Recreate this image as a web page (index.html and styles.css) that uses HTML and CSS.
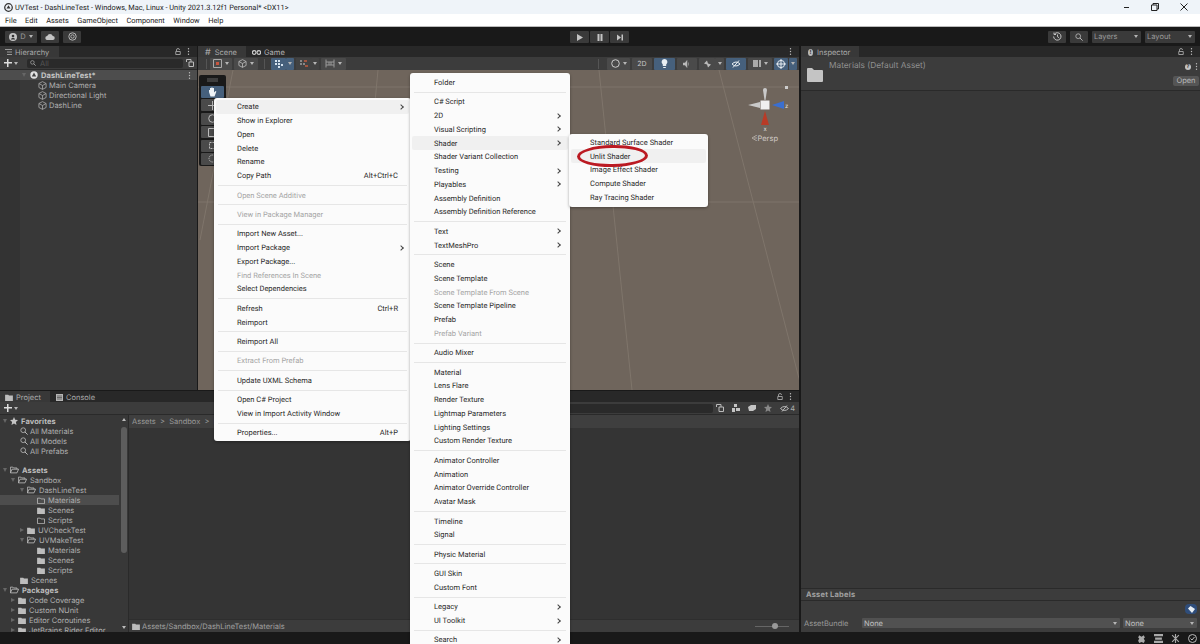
FILE: index.html
```html
<!DOCTYPE html>
<html lang="en">
<head>
    <meta charset="UTF-8">
    <title>UVTest - DashLineTest</title>
    <link rel="stylesheet" href="styles.css">
</head>
<body>
    <svg width="0" height="0" class="defs">
        <symbol id="folder" viewBox="0 0 10 9"><path d="M0 1h4l1 1h5v7H0z" fill="currentColor"/></symbol>
        <symbol id="folder-open" viewBox="0 0 11 9"><path d="M.5 8V1h3l1 1h4v1.500M.5 8l2-4.500h8L8.500 8z" fill="none" stroke="currentColor"/></symbol>
        <symbol id="folder-empty" viewBox="0 0 10 9"><path d="M.5 1.500h3.500l1 1h4.500v6h-9z" fill="none" stroke="currentColor"/></symbol>
        <symbol id="cube" viewBox="0 0 10 10"><path d="M5 .7l4 2.100v4.400l-4 2.100-4-2.100V2.800zM1 2.800l4 2.200 4-2.200M5 5v4.300" fill="none" stroke="currentColor" stroke-width=".9"/></symbol>
        <symbol id="search" viewBox="0 0 10 10"><circle cx="4" cy="4" r="3" fill="none" stroke="currentColor"/><path d="M6.200 6.200L9.500 9.500" stroke="currentColor" stroke-width="1.200"/></symbol>
        <symbol id="lock" viewBox="0 0 8 9"><path d="M2 4V2.500a2 2 0 0 1 4 0M1 4.500h6v4H1z" fill="none" stroke="currentColor"/></symbol>
        <symbol id="dots" viewBox="0 0 3 9"><circle cx="1.500" cy="1" r=".9" fill="currentColor"/><circle cx="1.500" cy="4.500" r=".9" fill="currentColor"/><circle cx="1.500" cy="8" r=".9" fill="currentColor"/></symbol>
    </svg>

    <div class="titlebar">
        <svg class="unity-logo" width="9" height="9" viewBox="0 0 10 10"><circle cx="5" cy="5" r="4.200" fill="none" stroke="#333" stroke-width="1.400"/><path d="M5 2.500l2.200 3.700H2.800z" fill="#333"/></svg>
        <span>UVTest - DashLineTest - Windows, Mac, Linux - Unity 2021.3.12f1 Personal* &lt;DX11&gt;</span>
        <div class="window-btns">
            <svg width="7" height="7" viewBox="0 0 7 7"><path d="M1 3.500h5" stroke="#222"/></svg>
            <svg width="8" height="8" viewBox="0 0 8 8"><path d="M.5 2h5.500v5.500H.5zM2 2V.5h5.500V6H6" fill="none" stroke="#222"/></svg>
            <svg width="8" height="8" viewBox="0 0 8 8"><path d="M.5.500l7 7M7.500.500l-7 7" stroke="#222"/></svg>
        </div>
    </div>
    <div class="menubar">
        <span>File</span><span>Edit</span><span>Assets</span><span>GameObject</span><span>Component</span><span>Window</span><span>Help</span>
    </div>

    <div class="toolbar">
        <div class="tool-left">
            <div class="tbtn account">
                <svg width="8" height="8" viewBox="0 0 8 8"><circle cx="4" cy="4" r="4" fill="#c4c4c4"/><circle cx="4" cy="3" r="1.300" fill="#333"/><path d="M1.800 6.500a2.300 2.300 0 0 1 4.400 0z" fill="#333"/></svg>
                <span>D</span><i class="arrow"></i>
            </div>
            <div class="tbtn wide">
                <svg width="10" height="6" viewBox="0 0 10 6"><path d="M2.500 6a2 2 0 0 1-.3-4A3 3 0 0 1 7.800 2 2 2 0 0 1 7.700 6z" fill="#c4c4c4"/></svg>
            </div>
            <div class="tbtn wide">
                <svg width="9" height="9" viewBox="0 0 9 9"><circle cx="4.500" cy="4.500" r="3.700" fill="none" stroke="#b5b5b5"/><circle cx="4.500" cy="4.500" r="1.700" fill="none" stroke="#b5b5b5"/></svg>
            </div>
        </div>
        <div class="play-group">
            <div class="tbtn play"><svg width="6" height="7" viewBox="0 0 6 7"><path d="M0 0l6 3.500L0 7z" fill="#c4c4c4"/></svg></div>
            <div class="tbtn play"><svg width="6" height="7" viewBox="0 0 6 7"><path d="M.5 0h2v7h-2zM3.500 0h2v7h-2z" fill="#c4c4c4"/></svg></div>
            <div class="tbtn play"><svg width="6" height="7" viewBox="0 0 6 7"><path d="M0 .5l4 3-4 3zM4.500.5H6v6H4.500z" fill="#c4c4c4"/></svg></div>
        </div>
        <div class="tool-right">
            <div class="tbtn history"><svg width="9" height="9" viewBox="0 0 9 9"><path d="M1.500 2a3.700 3.700 0 1 1-.9 2.500M1 .5V2.500h2M4.500 2.500v2.200l1.500 1" fill="none" stroke="#c4c4c4"/></svg></div>
            <div class="tbtn history"><svg width="8" height="8"><use href="#search"/></svg></div>
            <div class="tbtn dropdown layers"><span>Layers</span><i class="arrow"></i></div>
            <div class="tbtn dropdown layout"><span>Layout</span><i class="arrow"></i></div>
        </div>
    </div>

    <div class="workspace">
        <div class="left-col">
            <div class="top-row">
                <section class="panel hierarchy">
                    <div class="tabs">
                        <div class="tab active wide-tab">
                            <svg width="7" height="6" viewBox="0 0 7 6"><path d="M0 .5h7M2 3h5M2 5.500h5" stroke="#999"/></svg>
                            <span>Hierarchy</span>
                        </div>
                        <div class="tab-tools"><svg width="6" height="7"><use href="#lock"/></svg><svg width="3" height="7"><use href="#dots"/></svg></div>
                    </div>
                    <div class="search-bar">
                        <div class="add-btn"><span class="plus"></span><i class="arrow"></i></div>
                        <div class="search-field"><svg width="6" height="6"><use href="#search"/></svg><span>All</span></div>
                        <svg class="search-extra" width="8" height="8" viewBox="0 0 8 8"><path d="M.5 3V.5H5V3M3 3h4.500v4.500H3z" fill="none" stroke="#bbb"/></svg>
                    </div>
                    <div class="scene-root">
                        <i class="tri-down"></i>
                        <svg class="scene-icon" width="8" height="8" viewBox="0 0 8 8"><circle cx="4" cy="4" r="3.700" fill="#e4e4e4"/><path d="M4 1.500L6.200 5.500H1.800z" fill="#444"/></svg>
                        <span>DashLineTest*</span>
                        <svg class="row-dots" width="3" height="7"><use href="#dots"/></svg>
                    </div>
                    <div class="tree-row go"><svg width="9" height="9"><use href="#cube"/></svg>Main Camera</div>
                    <div class="tree-row go"><svg width="9" height="9"><use href="#cube"/></svg>Directional Light</div>
                    <div class="tree-row go"><svg width="9" height="9"><use href="#cube"/></svg>DashLine</div>
                </section>

                <section class="panel scene">
                    <div class="tabs">
                        <div class="tab active scene-tab"><b>#</b><span>Scene</span></div>
                        <div class="tab game-tab">
                            <svg width="9" height="5" viewBox="0 0 9 5"><circle cx="2.200" cy="2.500" r="1.800" fill="none" stroke="#ccc" stroke-width="1.200"/><circle cx="6.800" cy="2.500" r="1.800" fill="none" stroke="#ccc" stroke-width="1.200"/></svg>
                            <span>Game</span>
                        </div>
                        <div class="tab-tools"><svg width="3" height="7"><use href="#dots"/></svg></div>
                    </div>
                    <div class="scene-tools">
                        <span class="stool-sep first"></span>
                        <div class="stool-group">
                            <div class="stool w22"><svg width="9" height="9" viewBox="0 0 9 9"><path d="M.5.500h8v8h-8z" fill="none" stroke="#aaa"/><path d="M3 3h3v3H3z" fill="#c9553f"/></svg><i class="arrow"></i></div>
                            <div class="stool w24"><svg width="9" height="9"><use href="#cube"/></svg><i class="arrow"></i></div>
                        </div>
                        <span class="stool-sep"></span>
                        <div class="stool-group">
                            <div class="stool on w15"><svg width="9" height="9" viewBox="0 0 9 9"><path d="M1 1h2v2H1zM4 1h2v2H4zM1 4h2v2H1zM4 4h2v2H4zM7 5h2v2H7zM4 7h2v2H4z" fill="#d5e2ee"/></svg></div>
                            <div class="stool on narrow w8"><i class="arrow"></i></div>
                            <div class="stool dim w15"><svg width="9" height="9" viewBox="0 0 9 9"><path d="M1 1h2v2H1zM4 4h2v2H4zM1 4h2v2H1z" fill="#888"/><path d="M5 1h3v2H5zM6 6h3v2H6z" fill="#a2553f"/></svg></div>
                            <div class="stool dim narrow w8"><i class="arrow"></i></div>
                            <div class="stool w25"><svg width="10" height="9" viewBox="0 0 10 9"><path d="M1 .5v8M9 .5v8M1 3h8M1 6h8M4 3v3M6 3v3" fill="none" stroke="#999"/></svg><i class="arrow"></i></div>
                        </div>
                        <div class="stool-group right">
                            <span class="stool-sep"></span>
                            <div class="stool w23"><svg width="9" height="9" viewBox="0 0 9 9"><circle cx="4.500" cy="4.500" r="3.800" fill="none" stroke="#ccc"/></svg><i class="arrow"></i></div>
                            <div class="stool text w20">2D</div>
                            <div class="stool on w21"><svg width="7" height="9" viewBox="0 0 7 9"><path d="M3.500 0a3 3 0 0 1 1.700 5.400V7H1.800V5.400A3 3 0 0 1 3.500 0zM2.200 8h2.600v1H2.200z" fill="#e8eef3"/></svg></div>
                            <div class="stool w20"><svg width="8" height="8" viewBox="0 0 8 8"><path d="M0 3h2l2-2.500v7L2 5H0z M5.500 2.500v3" fill="#bbb" stroke="#bbb" stroke-width=".5"/></svg></div>
                            <div class="stool w16"><svg width="8" height="8" viewBox="0 0 8 8"><path d="M1 3.500l3-3 1 3 3 1-3 3-1-3z" fill="#bbb"/></svg></div>
                            <div class="stool narrow w9"><i class="arrow"></i></div>
                            <div class="stool on w20"><svg width="10" height="8" viewBox="0 0 10 8"><path d="M1 4q4-4 8 0-4 4-8 0zM2 7.500L8 .5" fill="none" stroke="#e8eef3"/></svg></div>
                            <div class="stool w24"><svg width="8" height="7" viewBox="0 0 8 7"><path d="M0 0h5v7H0zM6 0h2v7H6z" fill="#aaa"/></svg><i class="arrow"></i></div>
                            <div class="stool on w14"><svg width="10" height="10" viewBox="0 0 10 10"><circle cx="5" cy="5" r="3.600" fill="none" stroke="#e8eef3"/><path d="M5 0v10M0 5h10" stroke="#e8eef3"/></svg></div>
                            <div class="stool on narrow gap1 w8"><i class="arrow"></i></div>
                        </div>
                    </div>
                    <div class="viewport">
                        <svg class="grid" width="602" height="320" viewBox="0 0 602 320">
                            <path d="M0 17H602M0 132H602M35 0L2 170M401 0L434 320M521 0L604 320M180 0L150 320" stroke="#7f756b" fill="none"/>
                        </svg>
                        <div class="gizmo">
                            <svg width="48" height="48" viewBox="0 0 48 48">
                                <path d="M18 4a2 2 0 0 1 4 0L20.500 14h-1z" fill="#c9c9c9"/>
                                <path d="M3 19l12-3v6z" fill="#c9c9c9"/>
                                <path d="M27 19l12-4v8z" fill="#3a6fd0"/>
                                <path d="M16 39l4-14 4 14z" fill="#b83b27"/>
                                <rect x="15.500" y="14.500" width="9" height="9" fill="#f0f0f0"/>
                                <text x="40" y="22" class="axis">z</text>
                                <text x="18.500" y="45" class="axis">x</text>
                                <path d="M40 0h3v3h-3z" fill="#ccc"/>
                            </svg>
                            <div class="persp">
                                <svg width="5" height="6" viewBox="0 0 5 6"><path d="M5 0L0 3l5 3M5 3H2" fill="none" stroke="#bfb9b3" stroke-width=".8"/></svg>
                                <span>Persp</span>
                            </div>
                        </div>
                        <div class="scene-overlay">
                            <div class="overlay-grip"></div>
                            <div class="ov-btn on"><svg width="9" height="10" viewBox="0 0 9 10"><path d="M1 5V3h1v2-4h1.300v4V.5h1.300V5 1H6v4.500l1.500-1.500.9.600L6.500 9.500H2.500z" fill="#eef3f7"/></svg></div>
                            <div class="ov-btn"><svg width="9" height="9" viewBox="0 0 9 9"><path d="M4.500 0v9M0 4.500h9" stroke="#bbb"/></svg></div>
                            <div class="ov-btn"><svg width="9" height="9" viewBox="0 0 9 9"><circle cx="4.500" cy="4.500" r="3.800" fill="none" stroke="#bbb"/></svg></div>
                            <div class="ov-btn"><svg width="9" height="9" viewBox="0 0 9 9"><path d="M.5.500h8v8h-8z" fill="none" stroke="#bbb"/></svg></div>
                            <div class="ov-btn"><svg width="9" height="9" viewBox="0 0 9 9"><path d="M1.500 1.500h6v6h-6z" fill="none" stroke="#bbb" stroke-dasharray="2 1"/></svg></div>
                            <div class="ov-btn"><svg width="9" height="9" viewBox="0 0 9 9"><circle cx="4.500" cy="4.500" r="3.500" fill="none" stroke="#bbb" stroke-dasharray="1.500 1"/></svg></div>
                        </div>
                    </div>
                </section>
            </div>

            <section class="panel project">
                <div class="tabs">
                    <div class="tab active project-tab"><svg width="8" height="7"><use href="#folder"/></svg><span>Project</span></div>
                    <div class="tab console-tab">
                        <svg width="7" height="7" viewBox="0 0 7 7"><path d="M0 0h7v7H0z" fill="#b5b5b5"/><path d="M1 2h5M1 3.500h5M1 5h5" stroke="#333" stroke-width=".6"/></svg>
                        <span>Console</span>
                    </div>
                    <div class="tab-tools"><svg width="6" height="7"><use href="#lock"/></svg><svg width="3" height="7"><use href="#dots"/></svg></div>
                </div>
                <div class="search-bar project-bar">
                    <div class="add-btn"><span class="plus"></span><i class="arrow"></i></div>
                    <div class="search-field asset-search"></div>
                    <div class="filter-icons">
                        <svg width="8" height="8" viewBox="0 0 8 8"><path d="M.5 3V.5H5V3M3 3h4.500v4.500H3z" fill="none" stroke="#bbb"/></svg>
                        <svg width="8" height="8" viewBox="0 0 8 8"><path d="M2 0h3v3H2zM0 4h3v4H0zM4 4h4v3H4z" fill="#c4c4c4"/></svg>
                        <svg width="8" height="6" viewBox="0 0 8 6"><path d="M0 2l3-2h5v4L5 6H1z" fill="#c4c4c4"/></svg>
                        <svg width="8" height="8" viewBox="0 0 8 8"><path d="M4 0l1.200 2.800L8 3 5.900 5l.6 3L4 6.500 1.500 8l.6-3L0 3l2.800-.2z" fill="#888"/></svg>
                        <span class="hidden-count"><svg width="9" height="7" viewBox="0 0 9 7"><path d="M.5 3.500q4-4 8 0-4 4-8 0zM2 6.500L7 .5" fill="none" stroke="#bbb"/></svg>4</span>
                    </div>
                </div>
                <div class="project-body">
                    <div class="project-tree">
                        <div class="tree-list">
                            <div class="tree-row head l0"><i class="tri-down"></i><svg class="star" width="8" height="8" viewBox="0 0 8 8"><path d="M4 0l1.200 2.800L8 3 5.900 5l.6 3L4 6.500 1.500 8l.6-3L0 3l2.800-.2z" fill="#c4c4c4"/></svg>Favorites</div>
                            <div class="tree-row fav"><svg width="8" height="8"><use href="#search"/></svg>All Materials</div>
                            <div class="tree-row fav"><svg width="8" height="8"><use href="#search"/></svg>All Models</div>
                            <div class="tree-row fav"><svg width="8" height="8"><use href="#search"/></svg>All Prefabs</div>
                            <div class="tree-gap"></div>
                            <div class="tree-row head l0"><i class="tri-down"></i><svg width="9" height="8"><use href="#folder-open"/></svg>Assets</div>
                            <div class="tree-row l1"><i class="tri-down"></i><svg width="9" height="8"><use href="#folder-open"/></svg>Sandbox</div>
                            <div class="tree-row l2"><i class="tri-down"></i><svg width="9" height="8"><use href="#folder-open"/></svg>DashLineTest</div>
                            <div class="tree-row l3 selected"><svg width="8" height="7"><use href="#folder-empty"/></svg>Materials</div>
                            <div class="tree-row l3"><svg width="8" height="7"><use href="#folder"/></svg>Scenes</div>
                            <div class="tree-row l3"><svg width="8" height="7"><use href="#folder-empty"/></svg>Scripts</div>
                            <div class="tree-row l2"><i class="tri-right"></i><svg width="8" height="7"><use href="#folder"/></svg>UVCheckTest</div>
                            <div class="tree-row l2"><i class="tri-down"></i><svg width="9" height="8"><use href="#folder-open"/></svg>UVMakeTest</div>
                            <div class="tree-row l3"><svg width="8" height="7"><use href="#folder"/></svg>Materials</div>
                            <div class="tree-row l3"><svg width="8" height="7"><use href="#folder"/></svg>Scenes</div>
                            <div class="tree-row l3"><svg width="8" height="7"><use href="#folder"/></svg>Scripts</div>
                            <div class="tree-row l1 noarrow"><svg width="8" height="7"><use href="#folder"/></svg>Scenes</div>
                            <div class="tree-row head l0"><i class="tri-down"></i><svg width="9" height="8"><use href="#folder-open"/></svg>Packages</div>
                            <div class="tree-row l1"><i class="tri-right"></i><svg width="8" height="7"><use href="#folder"/></svg>Code Coverage</div>
                            <div class="tree-row l1"><i class="tri-right"></i><svg width="8" height="7"><use href="#folder"/></svg>Custom NUnit</div>
                            <div class="tree-row l1"><i class="tri-right"></i><svg width="8" height="7"><use href="#folder"/></svg>Editor Coroutines</div>
                            <div class="tree-row l1"><i class="tri-right"></i><svg width="8" height="7"><use href="#folder"/></svg>JetBrains Rider Editor</div>
                        </div>
                        <div class="tree-scroll"><i class="up"></i><div class="thumb"></div><i class="down"></i></div>
                    </div>
                    <div class="project-main">
                        <div class="breadcrumb">Assets &nbsp;&gt;&nbsp; Sandbox &nbsp;&gt;&nbsp; DashLineTest &nbsp;&gt;&nbsp; Materials</div>
                        <div class="project-files"></div>
                        <div class="path-bar">
                            <svg width="8" height="7"><use href="#folder"/></svg>
                            <span>Assets/Sandbox/DashLineTest/Materials</span>
                            <div class="zoom-slider"><i></i></div>
                        </div>
                    </div>
                </div>
            </section>
        </div>

        <section class="panel inspector">
            <div class="tabs">
                <div class="tab active inspector-tab"><b class="info">!</b><span>Inspector</span></div>
                <div class="tab-tools"><svg width="6" height="7"><use href="#lock"/></svg><svg width="3" height="7"><use href="#dots"/></svg></div>
            </div>
            <div class="asset-head">
                <svg class="big-folder" width="16" height="14" viewBox="0 0 16 14"><path d="M0 1q0-1 1-1h4l2 2h8q1 0 1 1v10q0 1-1 1H1q-1 0-1-1z" fill="#c4c4c4"/></svg>
                <div class="asset-title">Materials (Default Asset)</div>
                <div class="asset-tools">
                    <div class="asset-icons"><b class="help">?</b><svg width="3" height="7"><use href="#dots"/></svg></div>
                    <div class="open-btn">Open</div>
                </div>
            </div>
            <div class="inspector-body"></div>
            <div class="labels-head">Asset Labels</div>
            <div class="labels-body">
                <div class="tag-row"><span class="tag-btn"><svg width="7" height="7" viewBox="0 0 7 7"><path d="M0 2.500L2.500 0 7 3 4 7z" fill="#e8eef3"/></svg></span></div>
                <div class="bundle-row">
                    <span class="bundle-label">AssetBundle</span>
                    <div class="bundle-select main"><span>None</span><i class="arrow"></i></div>
                    <div class="bundle-select small"><span>None</span><i class="arrow"></i></div>
                </div>
            </div>
        </section>
    </div>

    <div class="statusbar">
        <svg width="9" height="9" viewBox="0 0 8 8"><path d="M2 1l2 1.500L6 1l1 2-1 1 1 2-1 2-2-1-2 1-1-2 1-2-1-1z" fill="#aaa"/></svg>
        <svg width="9" height="9" viewBox="0 0 8 8"><path d="M0 0h8v2H0zM1 3h6v2H1zM0 6h8v2H0z" fill="#aaa"/></svg>
        <svg width="9" height="9" viewBox="0 0 8 8"><path d="M1 1l6 6M7 1L1 7M4 0v8" stroke="#aaa"/></svg>
        <svg width="9" height="9" viewBox="0 0 9 9"><circle cx="4.500" cy="4.500" r="4" fill="none" stroke="#bbb"/><path d="M2.500 4.500l1.500 1.500 2.500-3" fill="none" stroke="#bbb"/></svg>
    </div>

    <div class="ctx ctx-main">
        <div class="item hover">Create<i class="chev"></i></div>
        <div class="item">Show in Explorer</div>
        <div class="item">Open</div>
        <div class="item">Delete</div>
        <div class="item">Rename</div>
        <div class="item">Copy Path<kbd>Alt+Ctrl+C</kbd></div>
        <div class="sep"></div>
        <div class="item off">Open Scene Additive</div>
        <div class="sep"></div>
        <div class="item off">View in Package Manager</div>
        <div class="sep"></div>
        <div class="item">Import New Asset...</div>
        <div class="item">Import Package<i class="chev"></i></div>
        <div class="item">Export Package...</div>
        <div class="item off">Find References In Scene</div>
        <div class="item">Select Dependencies</div>
        <div class="sep"></div>
        <div class="item">Refresh<kbd>Ctrl+R</kbd></div>
        <div class="item">Reimport</div>
        <div class="sep"></div>
        <div class="item">Reimport All</div>
        <div class="sep"></div>
        <div class="item off">Extract From Prefab</div>
        <div class="sep"></div>
        <div class="item">Update UXML Schema</div>
        <div class="sep"></div>
        <div class="item">Open C# Project</div>
        <div class="item">View in Import Activity Window</div>
        <div class="sep"></div>
        <div class="item">Properties...<kbd>Alt+P</kbd></div>
    </div>

    <div class="ctx ctx-create">
        <div class="item">Folder</div>
        <div class="sep"></div>
        <div class="item">C# Script</div>
        <div class="item">2D<i class="chev"></i></div>
        <div class="item">Visual Scripting<i class="chev"></i></div>
        <div class="item hover">Shader<i class="chev"></i></div>
        <div class="item">Shader Variant Collection</div>
        <div class="item">Testing<i class="chev"></i></div>
        <div class="item">Playables<i class="chev"></i></div>
        <div class="item">Assembly Definition</div>
        <div class="item">Assembly Definition Reference</div>
        <div class="sep"></div>
        <div class="item">Text<i class="chev"></i></div>
        <div class="item">TextMeshPro<i class="chev"></i></div>
        <div class="sep"></div>
        <div class="item">Scene</div>
        <div class="item">Scene Template</div>
        <div class="item off">Scene Template From Scene</div>
        <div class="item">Scene Template Pipeline</div>
        <div class="item">Prefab</div>
        <div class="item off">Prefab Variant</div>
        <div class="sep"></div>
        <div class="item">Audio Mixer</div>
        <div class="sep"></div>
        <div class="item">Material</div>
        <div class="item">Lens Flare</div>
        <div class="item">Render Texture</div>
        <div class="item">Lightmap Parameters</div>
        <div class="item">Lighting Settings</div>
        <div class="item">Custom Render Texture</div>
        <div class="sep"></div>
        <div class="item">Animator Controller</div>
        <div class="item">Animation</div>
        <div class="item">Animator Override Controller</div>
        <div class="item">Avatar Mask</div>
        <div class="sep"></div>
        <div class="item">Timeline</div>
        <div class="item">Signal</div>
        <div class="sep"></div>
        <div class="item">Physic Material</div>
        <div class="sep"></div>
        <div class="item">GUI Skin</div>
        <div class="item">Custom Font</div>
        <div class="sep"></div>
        <div class="item">Legacy<i class="chev"></i></div>
        <div class="item">UI Toolkit<i class="chev"></i></div>
        <div class="sep"></div>
        <div class="item">Search<i class="chev"></i></div>
    </div>

    <div class="ctx ctx-shader">
        <div class="item">Standard Surface Shader</div>
        <div class="item hover">Unlit Shader</div>
        <div class="item">Image Effect Shader</div>
        <div class="item">Compute Shader</div>
        <div class="item">Ray Tracing Shader</div>
    </div>
    <div class="red-ring"></div>
</body>
</html>
```

FILE: styles.css
```css
* { box-sizing: border-box; }
html, body { margin: 0; padding: 0; }
body { width: 1200px; height: 644px; overflow: hidden; display: flex; flex-direction: column; position: relative; background: #191919; font-family: Inter, "Liberation Sans", sans-serif; font-size: 7.500px; color: #b8b8b8; text-rendering: geometricPrecision; }
svg { display: block; flex: none; color: #bdbdbd; }
.defs { position: absolute; }
.arrow { display: block; width: 0; height: 0; border-left: 2.500px solid transparent; border-right: 2.500px solid transparent; border-top: 3px solid #b5b5b5; flex: none; }

.titlebar { height: 14px; flex: none; background: #eff4f9; color: #222; display: flex; align-items: center; padding-left: 4px; gap: 2px; font: 7.400px Roboto, sans-serif; }
.window-btns { margin-left: auto; display: flex; align-items: center; gap: 21px; padding-right: 12px; }
.menubar { height: 13px; flex: none; background: #fff; border-bottom: 1px solid #bbb; color: #222; display: flex; align-items: center; gap: 8.500px; padding-left: 5px; font: 7.400px Roboto, sans-serif; }

.toolbar { height: 19px; flex: none; background: #191919; display: flex; align-items: center; justify-content: space-between; padding: 0 5px; position: relative; }
.tbtn { background: #3a3a3a; height: 12px; display: flex; align-items: center; justify-content: center; border-radius: 1px; color: #999; }
.tool-left { display: flex; gap: 4px; }
.account { width: 32px; gap: 3px; }
.wide { width: 18px; }
.play-group { display: flex; gap: 1px; position: absolute; left: 570px; top: 4px; }
.play { width: 19px; }
.tool-right { display: flex; gap: 4px; }
.history { width: 18px; }
.dropdown { justify-content: space-between; padding: 0 3px 0 2px; }
.layers { width: 49px; }
.layout { width: 50px; }

.workspace { flex: 1; min-height: 0; display: flex; }
.left-col { width: 801px; flex: none; display: flex; flex-direction: column; border-right: 2px solid #191919; }
.top-row { height: 344px; flex: none; display: flex; }
.panel { background: #383838; display: flex; flex-direction: column; min-width: 0; }

.tabs { height: 11px; flex: none; background: #282828; display: flex; align-items: stretch; padding-right: 7px; font-size: 7.500px; color: #aaa; }
.tab { display: flex; align-items: center; gap: 3px; padding-top: 1px; padding-left: 5px; }
.tab.active { background: #383838; }
.tab-tools { margin-left: auto; display: flex; align-items: center; gap: 6px; }
.wide-tab { width: 59px; }
.scene-tab { width: 48px; padding-left: 7px; gap: 4px; }
.scene-tab b { font-weight: 400; font-size: 9px; }
.game-tab { padding-left: 6px; color: #b5b5b5; }
.project-tab { width: 50px; }
.console-tab { padding-left: 6px; }
.inspector-tab { width: 58px; padding-left: 7px; gap: 4px; }
.info { width: 5px; height: 7px; background: #bbb; border-radius: 50%; color: #333; font-size: 6px; line-height: 7px; text-align: center; }

.hierarchy { width: 197px; flex: none; margin-right: 1px; background: linear-gradient(90deg, #333 20px, #383838 20px); }
.search-bar { height: 13px; flex: none; display: flex; align-items: center; background: #3c3c3c; padding: 0 3px 0 4px; border-bottom: 1px solid #2a2a2a; }
.add-btn { display: flex; align-items: center; gap: 2px; width: 23px; flex: none; }
.plus { width: 8px; height: 8px; flex: none; background: linear-gradient(#ddd, #ddd) center / 8px 1.500px no-repeat, linear-gradient(#ddd, #ddd) center / 1.500px 8px no-repeat; }
.search-field { flex: 1; height: 9px; margin-right: 3px; background: #2a2a2a; border-radius: 2px; display: flex; align-items: center; gap: 4px; padding-left: 3px; color: #555; }
.scene-root { height: 10px; flex: none; background: #4d4d4d; display: flex; align-items: center; color: #c4c4c4; font-weight: 700; letter-spacing: .1px; padding-left: 22px; position: relative; }
.scene-root .tri-down { position: absolute; left: 22px; border-top-color: #666; }
.scene-icon { margin: 0 3px 0 8px; }
.row-dots { margin-left: auto; margin-right: 6px; }
.tri-down { display: block; width: 0; height: 0; flex: none; border-left: 2.500px solid transparent; border-right: 2.500px solid transparent; border-top: 4px solid #666; }
.tri-right { display: block; width: 0; height: 0; flex: none; border-top: 2.500px solid transparent; border-bottom: 2.500px solid transparent; border-left: 4px solid #666; }
.tree-row { height: 10px; display: flex; align-items: center; gap: 3px; white-space: nowrap; color: #b0b0b0; }
.go { padding-left: 38px; gap: 2px; }
.go svg { color: #aaa; }

.scene { flex: 1; }
.scene-tools { height: 13px; flex: none; background: #3c3c3c; display: flex; align-items: center; padding: 0 2px 0 8px; }
.stool-group { display: flex; align-items: center; gap: 2px; }
.stool-group.right { margin-left: auto; }
.stool-sep { width: 1px; height: 10px; background: #555; margin: 0 6px; flex: none; }
.stool-sep.first { margin: 0 3px 0 0; }
.stool { height: 12px; display: flex; align-items: center; justify-content: center; gap: 3px; background: #4a4a4a; border-radius: 1px; }
.stool.on { background: #46607c; }
.stool.dim { background: #424242; }
.stool.narrow { margin-left: -2px; }
.stool.gap1 { margin-left: -1px; }
.stool.text { color: #c4c4c4; font-size: 7px; }
.w8 { width: 8px; }
.w9 { width: 9px; }
.w14 { width: 14px; }
.w15 { width: 15px; }
.w16 { width: 16px; }
.w20 { width: 20px; }
.w21 { width: 21px; }
.w22 { width: 22px; }
.w23 { width: 23px; }
.w24 { width: 24px; }
.w25 { width: 25px; }
.viewport { flex: 1; position: relative; overflow: hidden; background: #6f655c; }
.grid { position: absolute; left: 0; top: 0; }
.gizmo { position: absolute; left: 547px; top: 16px; width: 48px; }
.axis { fill: #ddd; font: 6px Inter, sans-serif; }
.persp { display: flex; align-items: center; justify-content: flex-end; gap: 1px; height: 8px; padding-right: 15px; color: #cfcac6; white-space: nowrap; }
.scene-overlay { position: absolute; left: 1px; top: 5px; width: 27px; padding: 3px 2px 1px; background: #191919; border-radius: 2px; display: flex; flex-direction: column; gap: 1.400px; }
.overlay-grip { height: 4px; width: 11px; background: #3e3e3e; margin: 0 auto 2.600px; }
.ov-btn { height: 12px; flex: none; background: #4a4a4a; display: flex; align-items: center; justify-content: center; border-radius: 1px; }
.ov-btn.on { background: #46607c; }

.project { flex: 1; min-height: 0; border-top: 1px solid #191919; }
.project-bar { background: #3c3c3c; }
.asset-search { flex: none; width: 147px; margin: 0 3px 0 auto; }
.filter-icons { display: flex; align-items: center; gap: 8px; margin-right: 1px; color: #aaa; }
.hidden-count { display: flex; align-items: center; gap: 1px; }
.project-body { flex: 1; min-height: 0; display: flex; }
.project-tree { width: 129px; flex: none; display: flex; overflow: hidden; border-right: 1px solid #2a2a2a; }
.tree-list { flex: 1; min-width: 0; padding-top: 1px; }
.tree-gap { height: 9px; }
.head { font-weight: 700; letter-spacing: .1px; color: #bcbcbc; }
.l0 { padding-left: 3px; }
.fav { padding-left: 20px; gap: 2px; }
.l1 { padding-left: 11px; }
.l2 { padding-left: 20px; }
.l3 { padding-left: 37px; }
.noarrow { padding-left: 20px; }
.selected { background: #4d4d4d; }
.tree-scroll { width: 9px; flex: none; position: relative; display: flex; flex-direction: column; align-items: center; justify-content: space-between; padding: 3px 0 3px; }
.tree-scroll .thumb { position: absolute; left: 2px; top: 12px; width: 6px; height: 126px; background: #5d5d5d; border-radius: 3px; }
.tree-scroll i { width: 0; height: 0; border-left: 2px solid transparent; border-right: 2px solid transparent; }
.tree-scroll .up { border-bottom: 3px solid #bbb; }
.tree-scroll .down { border-top: 3px solid #bbb; }
.project-main { flex: 1; min-width: 0; display: flex; flex-direction: column; background: #343434; }
.breadcrumb { height: 13px; flex: none; background: #3f3f3f; padding: 0 3px; line-height: 13px; color: #999; }
.project-files { flex: 1; }
.path-bar { height: 13px; flex: none; display: flex; align-items: center; gap: 2px; padding-left: 3px; background: #3c3c3c; border-top: 1px solid #2e2e2e; color: #a0a0a0; }
.zoom-slider { margin-left: auto; margin-right: 10px; width: 34px; height: 1px; background: #666; position: relative; }
.zoom-slider i { position: absolute; left: 17px; top: -3px; width: 6px; height: 6px; border-radius: 50%; background: #999; }

.inspector { flex: 1; min-width: 0; }
.asset-head { height: 34px; flex: none; display: flex; padding: 3px 1px 0 6px; border-bottom: 1px solid #2a2a2a; background: #3c3c3c; }
.big-folder { margin-top: 8px; }
.asset-title { margin-left: 6px; font-size: 8.300px; color: #909090; line-height: 13px; }
.asset-tools { margin-left: auto; display: flex; flex-direction: column; align-items: flex-end; gap: 5px; }
.asset-icons { display: flex; align-items: center; gap: 4px; height: 9px; margin-top: 2px; padding-right: 1px; }
.help { width: 6px; height: 6px; border-radius: 50%; background: #c4c4c4; color: #333; font-size: 5px; line-height: 6px; text-align: center; }
.open-btn { width: 26px; height: 10px; background: #555; border-radius: 2px; color: #bbb; text-align: center; line-height: 10px; font-size: 7.500px; }
.inspector-body { flex: 1; }
.labels-head { height: 13px; flex: none; background: #3c3c3c; border-top: 1px solid #2a2a2a; border-bottom: 1px solid #2a2a2a; font-weight: 700; color: #a0a0a0; line-height: 11px; padding-left: 5px; letter-spacing: .2px; }
.labels-body { height: 31px; flex: none; background: #3c3c3c; padding: 3px 3px 0 3px; }
.tag-row { display: flex; justify-content: flex-end; height: 14px; }
.tag-btn { width: 12px; height: 10px; border-radius: 4px; background: #2f4d7a; display: flex; align-items: center; justify-content: center; }
.bundle-row { display: flex; align-items: center; gap: 3px; }
.bundle-label { width: 55px; color: #999; }
.bundle-select { height: 10px; background: #515151; border-radius: 1px; display: flex; align-items: center; justify-content: space-between; padding: 0 3px 0 2px; color: #c0c0c0; }
.main { width: 258px; }
.small { width: 74px; }

.statusbar { height: 12px; flex: none; background: #191919; display: flex; align-items: center; justify-content: flex-end; gap: 8px; padding-right: 3px; }

.ctx { position: absolute; background: #fbfbfb; border-radius: 3px; box-shadow: 0 1px 3px rgba(0, 0, 0, .35); padding: 2px 2px 1px; font: 7.500px Roboto, sans-serif; color: #2a2a2a; }
.ctx-main { left: 214px; top: 98px; width: 197px; height: 343px; }
.ctx-create { left: 410px; top: 73px; width: 160px; height: 600px; padding-top: 2.500px; }
.ctx-shader { left: 569px; top: 134px; width: 139px; height: 73px; padding-top: 1.500px; }
.item { height: 13.780px; display: flex; align-items: center; padding: 0 8px 0 21px; border-radius: 2px; white-space: nowrap; }
.ctx-create .item { padding-left: 22px; }
.ctx-shader .item { padding-left: 19px; }
.ctx-main .chev { margin-right: -2px; }
.item.hover { background: #f0f0f0; }
.item.off { color: #a5a5a5; }
.item kbd { margin-left: auto; font: inherit; padding-right: 3px; }
.chev { margin-left: auto; width: 4px; height: 4px; border-top: 1px solid #444; border-right: 1px solid #444; transform: rotate(45deg); }
.sep { height: 5.650px; display: flex; align-items: center; }
.sep::after { content: ""; flex: 1; height: 1px; background: #e6e6e6; margin: 0 2px; }
.red-ring { position: absolute; left: 577px; top: 145px; width: 71px; height: 22px; border: 3px solid #bb1a22; border-radius: 50%; transform: rotate(-1deg); }
```
